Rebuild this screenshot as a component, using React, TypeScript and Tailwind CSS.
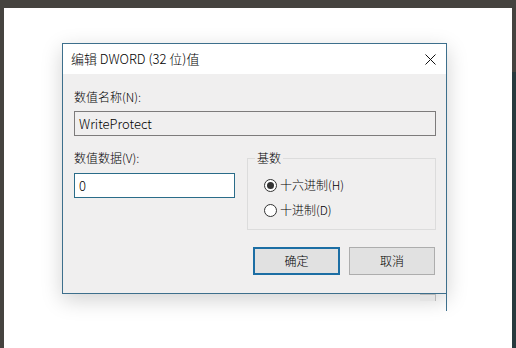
import React from 'react';

const font = { fontFamily: '"Noto Sans CJK SC", "Noto Sans", sans-serif' };

const Radio: React.FC<{ checked?: boolean; label: string }> = ({ checked, label }) => (
  <div className="flex items-center h-[16px]">
    <span className="w-[13px] h-[13px] rounded-full border border-[#333333] bg-white flex items-center justify-center">
      {checked && <span className="w-[7px] h-[7px] rounded-full bg-[#333333]" />}
    </span>
    <span className="ml-[3px] text-[12px] leading-[16px] text-black">{label}</span>
  </div>
);

export default function App() {
  return (
    <div className="w-[516px] h-[348px] flex flex-col bg-[#45433f] overflow-hidden font-light" style={font}>
      <div className="h-[8px] shrink-0" />
      <div className="flex flex-1">
        <div className="w-[4px] shrink-0" />
        <div className="flex-1 bg-white">
          <div className="relative ml-[58px] mt-[35px] w-[385px]">
            <div className="h-[251px] border border-[#3d6f8c] flex flex-col shadow-[0_6px_20px_rgba(0,0,0,0.18)]">
              <div className="h-[30px] bg-white flex items-center justify-between pl-[8px] pr-[10px]">
                <span className="text-[13px] text-black">编辑 DWORD (32 位)值</span>
                <svg width="11" height="11" viewBox="0 0 11 11">
                  <path d="M0.5 0.5 L10.5 10.5 M10.5 0.5 L0.5 10.5" stroke="#111" strokeWidth="1" />
                </svg>
              </div>
              <div className="flex-1 bg-[#f0efef] pl-[11px] pr-[10px] pt-[15px]">
                <div className="text-[12px] leading-[16px] text-black">数值名称(N):</div>
                <div className="mt-[6px] h-[25px] border border-[#7d7b7b] bg-[#f0efef] flex items-center pl-[4px] text-[13px] text-black">
                  WriteProtect
                </div>
                <div className="flex mt-[14px]">
                  <div className="w-[161px]">
                    <div className="text-[12px] leading-[16px] text-black">数值数据(V):</div>
                    <div className="mt-[7px] h-[25px] border border-[#2a6c89] bg-white flex items-center pl-[4px] text-[13px] text-black">
                      0
                    </div>
                  </div>
                  <div className="ml-[12px] flex-1 pt-[8px]">
                    <div className="relative h-[72px] border border-[#dcdcdc] pl-[16px] pt-[18px] flex flex-col gap-[9px]">
                      <span className="absolute left-[7px] top-[-9px] px-[2px] bg-[#f0efef] text-[12px] leading-[16px] text-black">基数</span>
                      <Radio checked label="十六进制(H)" />
                      <Radio label="十进制(D)" />
                    </div>
                  </div>
                </div>
                <div className="flex justify-end gap-[9px] mt-[17px] pr-[1px]">
                  <button className="w-[87px] h-[28px] bg-[#e1e1e1] border-2 border-[#1c6ea4] text-[12px] text-black">确定</button>
                  <button className="w-[86px] h-[28px] bg-[#e1e1e1] border border-[#adadad] text-[12px] text-black">取消</button>
                </div>
              </div>
            </div>
            <div className="absolute right-0 top-[251px] w-[1px] h-[17px] bg-[#3d6f8c]" />
            <div className="absolute right-[11px] top-[251px] w-[16px] h-[7px] bg-[#e4e4e4] border-t border-r border-[#b8b8b8]" />
          </div>
        </div>
        <div className="w-[4px] shrink-0 flex flex-col">
          <div className="h-[64px] bg-[#45433f]" />
          <div className="flex-1 bg-[#283a3e]" />
        </div>
      </div>
    </div>
  );
}
